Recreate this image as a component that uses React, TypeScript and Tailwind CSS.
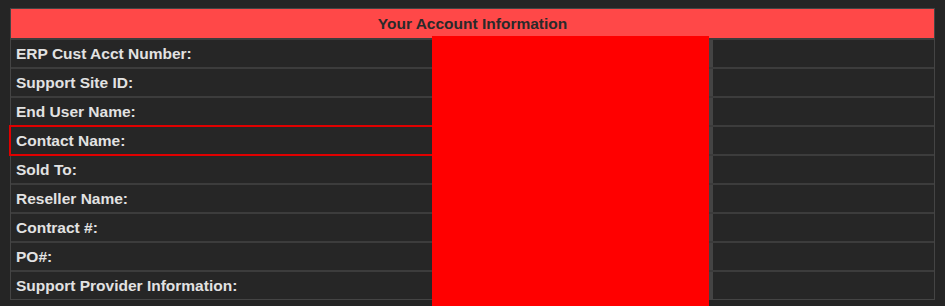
const rows = [
  'ERP Cust Acct Number:',
  'Support Site ID:',
  'End User Name:',
  'Contact Name:',
  'Sold To:',
  'Reseller Name:',
  'Contract #:',
  'PO#:',
  'Support Provider Information:',
]

export default function App() {
  return (
    <div className="relative h-[306px] w-[945px] overflow-hidden bg-[#252525] pt-[8px] pl-[10px] font-['Liberation_Sans',Arial,sans-serif]">
      <div className="w-[925px] border border-[#444444]">
        <div className="flex h-[29px] items-center justify-center bg-[#ff4848] text-[15.5px] font-bold text-[#2a2a2a]">
          Your Account Information
        </div>
        {rows.map((label) => (
          <div key={label} className="flex h-[29px] border-t-2 border-[#3c3c3c] bg-[#262626]">
            <div
              className={
                label === 'Contact Name:'
                  ? 'flex w-[424px] items-center pl-[5px] text-[15.5px] font-bold text-[#e2e2e2] outline-2 outline-[#e00000] outline-offset-0'
                  : 'flex w-[424px] items-center pl-[5px] text-[15.5px] font-bold text-[#e2e2e2]'
              }
            >
              {label}
            </div>
            <div className="w-[278px] border-r-4 border-[#444444]" />
            <div className="flex-1" />
          </div>
        ))}
      </div>
      {/* redacted values */}
      <div className="absolute left-[432px] top-[36px] h-[280px] w-[277px] bg-[#ff0000]" />
    </div>
  )
}
